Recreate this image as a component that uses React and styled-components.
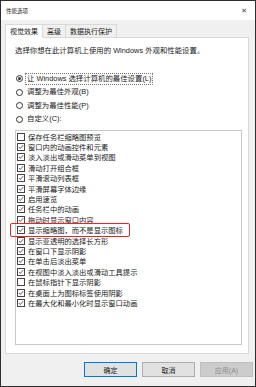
import React from "react";
import styled, { createGlobalStyle } from "styled-components";

const GlobalStyle = createGlobalStyle`
    html, body {
        margin: 0;
        padding: 0;
        background: #f0f0f0;
    }
    * {
        box-sizing: border-box;
    }
`;

const opcoes = [
    { texto: "保存任务栏缩略图预览", marcado: false },
    { texto: "窗口内的动画控件和元素", marcado: true },
    { texto: "淡入淡出或滑动菜单到视图", marcado: true },
    { texto: "滑动打开组合框", marcado: true },
    { texto: "平滑滚动列表框", marcado: true },
    { texto: "平滑屏幕字体边缘", marcado: true },
    { texto: "启用速览", marcado: true },
    { texto: "任务栏中的动画", marcado: true },
    { texto: "拖动时显示窗口内容", marcado: true },
    { texto: "显示缩略图，而不是显示图标", marcado: true, destaque: true },
    { texto: "显示亚透明的选择长方形", marcado: true },
    { texto: "在窗口下显示阴影", marcado: true },
    { texto: "在单击后淡出菜单", marcado: true },
    { texto: "在视图中淡入淡出或滑动工具提示", marcado: true },
    { texto: "在鼠标指针下显示阴影", marcado: false },
    { texto: "在桌面上为图标标签使用阴影", marcado: true },
    { texto: "在最大化和最小化时显示窗口动画", marcado: true },
];

const radios = [
    { texto: "让 Windows 选择计算机的最佳设置(L)", marcado: true, foco: true },
    { texto: "调整为最佳外观(B)" },
    { texto: "调整为最佳性能(P)" },
    { texto: "自定义(C):" },
];

function Check({ marcado }) {
    return (
        <CheckBox>
            {marcado && (
                <svg width="6" height="6" viewBox="0 0 6 6">
                    <path d="M0.8 3 L2.3 4.5 L5.2 1.2" fill="none" stroke="#333" strokeWidth="0.8" />
                </svg>
            )}
        </CheckBox>
    );
}

export default function App() {
    return (
        <>
            <GlobalStyle />
            <Janela>
                <BarraTitulo>
                    <Titulo>性能选项</Titulo>
                    <Fechar>✕</Fechar>
                </BarraTitulo>
                <Corpo>
                    <Abas>
                        <Aba ativa>视觉效果</Aba>
                        <Aba>高级</Aba>
                        <Aba>数据执行保护</Aba>
                    </Abas>
                    <Painel>
                        <Descricao>选择你想在此计算机上使用的 Windows 外观和性能设置。</Descricao>
                        <Radios>
                            {radios.map((r) => (
                                <RadioLinha key={r.texto}>
                                    <Radio marcado={r.marcado} />
                                    <RadioTexto foco={r.foco}>{r.texto}</RadioTexto>
                                </RadioLinha>
                            ))}
                        </Radios>
                        <Lista>
                            {opcoes.map((o) => (
                                <Item key={o.texto}>
                                    <Check marcado={o.marcado} />
                                    <span>{o.texto}</span>
                                    {o.destaque && <Destaque />}
                                </Item>
                            ))}
                        </Lista>
                    </Painel>
                    <Botoes>
                        <Botao foco>确定</Botao>
                        <Botao>取消</Botao>
                        <Botao disabled>应用(A)</Botao>
                    </Botoes>
                </Corpo>
            </Janela>
        </>
    );
}

const Janela = styled.div`
    width: 256px;
    height: 387px;
    border: 1px solid #2e2e2e;
    background: #f0f0f0;
    display: flex;
    flex-direction: column;
    font-family: "Liberation Sans", "Noto Sans CJK SC", sans-serif;
    color: #1a1a1a;
`;

const BarraTitulo = styled.div`
    height: 19px;
    flex-shrink: 0;
    background: #ffffff;
    display: flex;
    align-items: center;
    justify-content: space-between;
    padding: 0 8px 0 5px;
`;

const Titulo = styled.span`
    font-size: 5.5px;
    color: #222;
`;

const Fechar = styled.span`
    font-size: 7px;
    color: #444;
    font-family: "DejaVu Sans", sans-serif;
`;

const Corpo = styled.div`
    flex: 1;
    display: flex;
    flex-direction: column;
    padding: 4px 4px 9px 4px;
`;

const Abas = styled.div`
    display: flex;
    height: 13px;
    align-items: flex-end;
    position: relative;
    z-index: 1;
`;

const Aba = styled.div`
    height: ${(p) => (p.ativa ? "14px" : "13px")};
    padding: 0 4px;
    font-size: 7px;
    display: flex;
    align-items: center;
    background: ${(p) => (p.ativa ? "#ffffff" : "#f0f0f0")};
    border: 1px solid #d9d9d9;
    border-bottom: ${(p) => (p.ativa ? "1px solid #ffffff" : "none")};
    border-left: ${(p) => (p.ativa ? "1px solid #d9d9d9" : "none")};
    margin-bottom: ${(p) => (p.ativa ? "-1px" : "0")};
    &:first-child {
        border-left: 1px solid #d9d9d9;
    }
`;

const Painel = styled.div`
    flex: 1;
    width: 244px;
    background: #ffffff;
    border: 1px solid #d9d9d9;
    display: flex;
    flex-direction: column;
    padding: 8px 6px 8px 9px;
`;

const Descricao = styled.p`
    margin: 0;
    font-size: 7.4px;
    line-height: 10px;
`;

const Radios = styled.div`
    display: flex;
    flex-direction: column;
    margin-top: 16px;
`;

const RadioLinha = styled.div`
    display: flex;
    align-items: center;
    height: 13.5px;
    font-size: 7.4px;
`;

const Radio = styled.span`
    width: 7px;
    height: 7px;
    margin-left: 1px;
    margin-right: 2px;
    border-radius: 50%;
    border: 1px solid #333;
    display: flex;
    align-items: center;
    justify-content: center;
    flex-shrink: 0;
    &::after {
        content: "";
        width: 3px;
        height: 3px;
        border-radius: 50%;
        background: ${(p) => (p.marcado ? "#333" : "transparent")};
    }
`;

const RadioTexto = styled.span`
    padding: 0 1px;
    line-height: 10px;
    border: 1px dotted ${(p) => (p.foco ? "#777" : "transparent")};
`;

const Lista = styled.div`
    flex: 1;
    margin-top: 4px;
    border: 1px solid #c9c9c9;
    padding-top: 0.5px;
    display: flex;
    flex-direction: column;
`;

const Item = styled.div`
    position: relative;
    height: 10.4px;
    display: flex;
    align-items: center;
    font-size: 7.3px;
    padding-left: 1px;
`;

const CheckBox = styled.span`
    width: 8px;
    height: 8px;
    border: 1px solid #444;
    margin-right: 3px;
    flex-shrink: 0;
    display: flex;
    align-items: center;
    justify-content: center;
    background: #fff;
    svg {
        display: block;
    }
`;

const Destaque = styled.span`
    position: absolute;
    left: -6px;
    top: -2px;
    width: 120px;
    height: 14px;
    border: 1.5px solid #e8242b;
    border-radius: 2px;
`;

const Botoes = styled.div`
    display: flex;
    justify-content: flex-end;
    gap: 5px;
    margin-top: 8px;
    margin-right: -2px;
`;

const Botao = styled.button`
    width: 53px;
    height: 15px;
    padding: 0;
    font-size: 7px;
    font-family: "Liberation Sans", "Noto Sans CJK SC", sans-serif;
    color: #1a1a1a;
    background: #e1e1e1;
    border: ${(p) => (p.foco ? "1.5px solid #0078d7" : "1px solid #adadad")};
    &:disabled {
        color: #8c8c8c;
        background: #cccccc;
        border-color: #bfbfbf;
    }
`;
